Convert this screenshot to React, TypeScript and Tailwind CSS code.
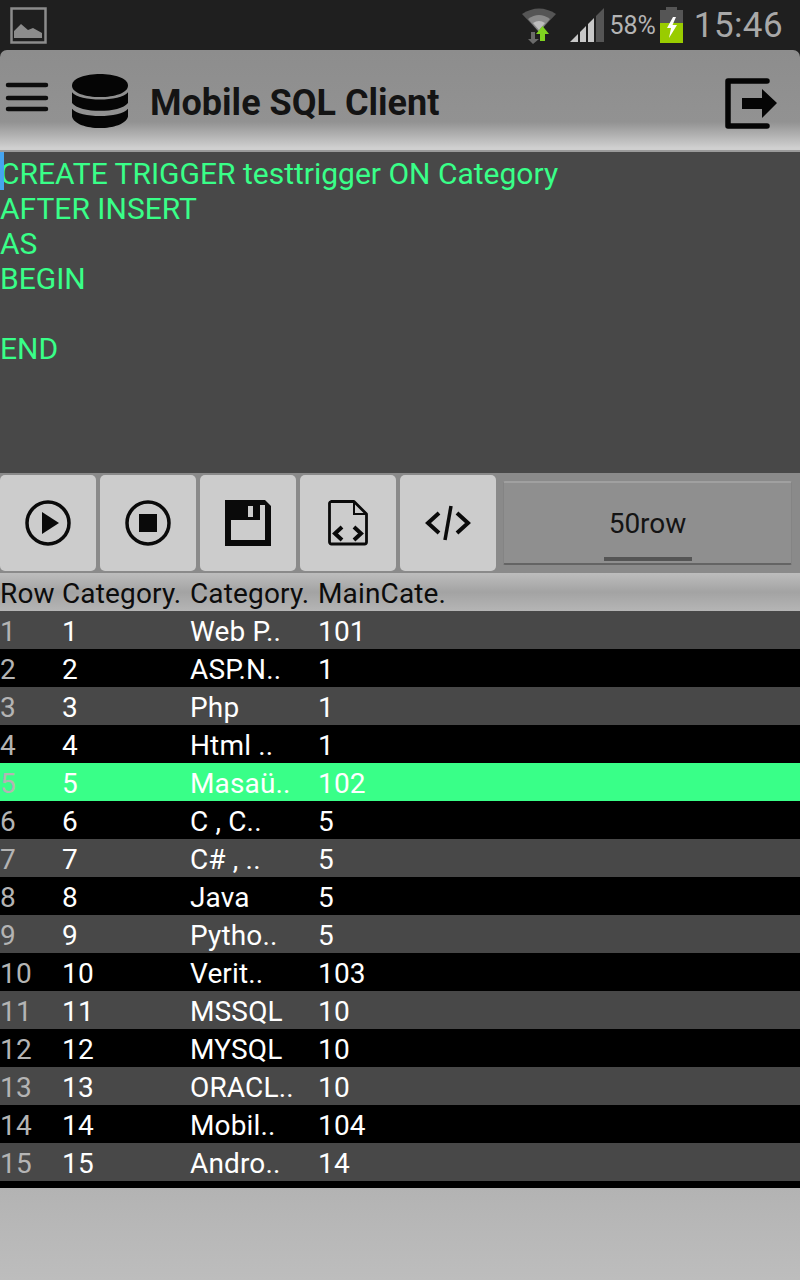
const rows = [
  ["1", "1", "Web P..", "101"],
  ["2", "2", "ASP.N..", "1"],
  ["3", "3", "Php", "1"],
  ["4", "4", "Html ..", "1"],
  ["5", "5", "Masaü..", "102"],
  ["6", "6", "C , C..", "5"],
  ["7", "7", "C# , ..", "5"],
  ["8", "8", "Java", "5"],
  ["9", "9", "Pytho..", "5"],
  ["10", "10", "Verit..", "103"],
  ["11", "11", "MSSQL", "10"],
  ["12", "12", "MYSQL", "10"],
  ["13", "13", "ORACL..", "10"],
  ["14", "14", "Mobil..", "104"],
  ["15", "15", "Andro..", "14"],
];

const sql = ["CREATE TRIGGER testtrigger ON Category", "AFTER INSERT", "AS", "BEGIN", "\u00a0", "END"];

function StatusBar() {
  return (
    <div className="flex h-[50px] items-center bg-[#1f1f1f] pl-[10px] pr-[17px]">
      <svg width="37" height="37" viewBox="0 0 37 37" className="mt-[1px]">
        <rect x="1.5" y="1.5" width="34" height="34" fill="none" stroke="#8c8c8c" strokeWidth="2.5" />
        <path d="M4 31V24L11 17L18 23L23 21L32 26V31Z" fill="#8c8c8c" />
      </svg>
      <div className="ml-auto flex items-center">
        <svg width="34" height="36" viewBox="0 0 34 36" className="mt-[1px]">
          <path d="M0 6Q17 -5 34 6L17 24Z" fill="#555" />
          <path d="M6 11Q17 3 28 11L17 24Z" fill="#8a8a8a" />
          <path d="M11 15Q17 11 23 15L17 22Z" fill="#bdbdbd" />
          <path d="M9 24H13V31H17L11 36L6 31H9Z" fill="#6a6a6a" />
          <path d="M18 33V26H14L20.5 18L27 26H23V33Z" fill="#7fd320" />
        </svg>
        <svg width="34" height="34" viewBox="0 0 34 34" className="ml-[14px]">
          <path d="M26 34V8L34 0V34Z" fill="#555" />
          <path d="M0 34L8 26V34ZM10 24L16 18V34H10ZM18 16L24 10V34H18Z" fill="#c8c8c8" />
        </svg>
        <span className="ml-[5px] mt-[1px] text-[25px] leading-none text-[#b4b4b4]">58%</span>
        <svg width="23" height="36" viewBox="0 0 23 36" className="ml-[4px]">
          <path d="M6 0H17V3H23V36H0V3H6Z" fill="#555" />
          <path d="M0 16H23V36H0Z" fill="#99cc00" />
          <path d="M13 10L7 21H11L9 31L17 18H12.5L16 10Z" fill="#fff" />
        </svg>
        <span className="ml-[11px] text-[35px] leading-none tracking-[0.4px] text-[#a8a8a8]">15:46</span>
      </div>
    </div>
  );
}

function Header() {
  return (
    <div className="box-content flex h-[100px] items-center rounded-t-[7px] border-b-2 border-[#9a9a9a] bg-[linear-gradient(#8d8d8d_0%,#929292_72%,#d0d0d0_98%)]">
      <svg width="44" height="32" viewBox="0 0 44 32" className="mb-[5px] ml-[5px]">
        <path d="M3 3H41M3 16H41M3 27H41" stroke="#0d0d0d" strokeWidth="4.5" strokeLinecap="round" />
      </svg>
      <svg width="56" height="56" viewBox="0 0 58 58" className="ml-[23px]">
        <path d="M0 14C0 -2 58 -2 58 14C58 30 0 30 0 14Z" fill="#050505" />
        <path d="M0 21C8 31 50 31 58 21V32C50 43 8 43 0 32Z" fill="#050505" />
        <path d="M0 38C8 48 50 48 58 38V46C54 62 4 62 0 46Z" fill="#050505" />
      </svg>
      <span className="ml-[22px] mt-[5px] text-[36px] font-bold leading-none text-[#141414]">Mobile SQL Client</span>
      <svg width="52" height="51" viewBox="0 0 52 51" className="ml-auto mr-[23px] mt-[6px]">
        <path d="M42 3H3V48H42" fill="none" stroke="#050505" strokeWidth="5.5" strokeLinejoin="round" strokeLinecap="round" />
        <path d="M17 20H37V11L52 25L37 40V31H17Z" fill="#050505" />
      </svg>
    </div>
  );
}

function Editor() {
  return (
    <div className="relative h-[321px] bg-[#484848] pt-[4px] text-[30px] leading-[35px] text-[#39ff88]">
      <div className="absolute left-0 top-0 h-[38px] w-[4px] bg-[#45a5f0]" />
      {sql.map((line, i) => (
        <div key={i}>{line}</div>
      ))}
    </div>
  );
}

function ToolButton({ children }: { children: React.ReactNode }) {
  return (
    <div className="flex h-[96px] w-[96px] items-center justify-center rounded-[5px] bg-[#cccccc]">
      {children}
    </div>
  );
}

function Toolbar() {
  return (
    <div className="flex h-[100px] gap-[4px] bg-[#8a8a8a] pt-[2px]">
      <ToolButton>
        <svg width="46" height="46" viewBox="0 0 46 46">
          <circle cx="23" cy="23" r="21" fill="none" stroke="#0a0a0a" strokeWidth="3.5" />
          <path d="M17 12L34 23L17 34Z" fill="#0a0a0a" />
        </svg>
      </ToolButton>
      <ToolButton>
        <svg width="46" height="46" viewBox="0 0 46 46">
          <circle cx="23" cy="23" r="21" fill="none" stroke="#0a0a0a" strokeWidth="3.5" />
          <rect x="14" y="14" width="18" height="18" fill="#0a0a0a" />
        </svg>
      </ToolButton>
      <ToolButton>
        <svg width="46" height="46" viewBox="0 0 46 46">
          <path d="M0 0H40L46 6V46H0Z" fill="#0a0a0a" />
          <path d="M6 20H35V5H40V40H6Z" fill="#cccccc" />
          <path d="M23 6H28V17H23Z" fill="#cccccc" />
        </svg>
      </ToolButton>
      <ToolButton>
        <svg width="40" height="46" viewBox="0 0 40 46" fill="none" stroke="#0a0a0a">
          <path d="M3 1.5H26L38.5 14V42A2 2 0 0 1 36.5 44H3.500A2 2 0 0 1 1.500 42V3A2 2 0 0 1 3 1.500Z" strokeWidth="2.800" strokeLinejoin="round" />
          <path d="M26 1.500V14H38.500" strokeWidth="2" />
          <path d="M14 27L7 33.500L14 40M26 27L33 33.500L26 40" strokeWidth="4" />
        </svg>
      </ToolButton>
      <ToolButton>
        <svg width="46" height="36" viewBox="0 0 46 36" fill="none" stroke="#0a0a0a">
          <path d="M14 8L3 18L14 28M32 8L43 18L32 28" strokeWidth="4" />
          <path d="M26 1L20 35" strokeWidth="3.500" />
        </svg>
      </ToolButton>
      <div className="mb-[8px] ml-[3px] mr-[8px] mt-[6px] flex flex-1 flex-col items-center rounded-[2px] border-x border-y-2 border-x-[#848484] border-t-[#a0a0a0] border-b-[#646464] bg-[#8f8f8f]">
        <span className="mt-[25px] text-[28px] leading-[32px] text-[#141414]">50row</span>
        <div className="mb-[2px] mt-auto h-[4px] w-[88px] bg-[#555555]" />
      </div>
    </div>
  );
}

function DataRow({ row, index }: { row: string[]; index: number }) {
  const selected = index === 4;
  const bg = selected ? "bg-[#39ff88]" : index % 2 === 0 ? "bg-[#484848]" : "bg-black";
  return (
    <div className={`flex h-[38px] items-center pt-[4px] text-[28px] leading-[34px] tracking-[0.15px] text-white ${bg}`}>
      <span className="w-[62px] text-[#b4b4b4]">{row[0]}</span>
      <span className="w-[128px]">{row[1]}</span>
      <span className="w-[128px]">{row[2]}</span>
      <span>{row[3]}</span>
    </div>
  );
}

export default function App() {
  return (
    <div className="h-[1280px] w-[800px] overflow-hidden bg-[#1f1f1f] font-['Roboto',sans-serif]">
      <StatusBar />
      <Header />
      <Editor />
      <Toolbar />
      <div className="flex h-[38px] items-center bg-[linear-gradient(#bdbdbd,#a3a3a3_50%,#b5b5b5)] pt-[4px] text-[28px] leading-[34px] tracking-[0.15px] text-[#0c0c0c]">
        <span className="w-[62px]">Row</span>
        <span className="w-[128px]">Category.</span>
        <span className="w-[128px]">Category.</span>
        <span>MainCate.</span>
      </div>
      {rows.map((row, i) => (
        <DataRow key={row[0]} row={row} index={i} />
      ))}
      <div className="h-[7px] bg-black" />
      <div className="h-[92px] bg-[linear-gradient(#b3b3b3,#bdbdbd)]" />
    </div>
  );
}
